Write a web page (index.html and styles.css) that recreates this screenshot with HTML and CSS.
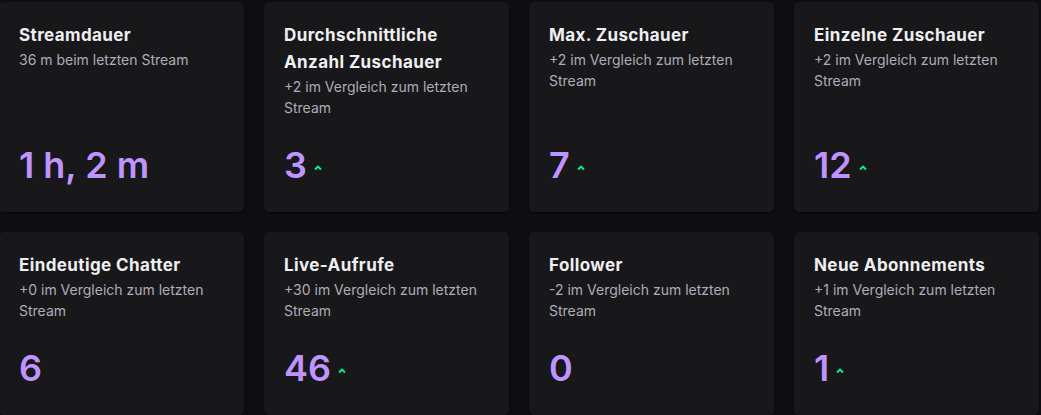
FILE: index.html
```html
<!DOCTYPE html>
<html lang="de">
<head>
    <meta charset="UTF-8">
    <meta name="viewport" content="width=device-width, initial-scale=1.0">
    <title>Stream-Zusammenfassung</title>
    <link rel="stylesheet" href="styles.css">
</head>
<body>
    <div class="stats">
        <div class="card">
            <h3>Streamdauer</h3>
            <p class="compare">36 m beim letzten Stream</p>
            <div class="value">1 h, 2 m</div>
        </div>
        <div class="card">
            <h3>Durchschnittliche Anzahl Zuschauer</h3>
            <p class="compare">+2 im Vergleich zum letzten Stream</p>
            <div class="value">3 <svg class="up" viewBox="0 0 10 10"><path d="M2 6.5 5 3.5 8 6.5"/></svg></div>
        </div>
        <div class="card">
            <h3>Max. Zuschauer</h3>
            <p class="compare">+2 im Vergleich zum letzten Stream</p>
            <div class="value">7 <svg class="up" viewBox="0 0 10 10"><path d="M2 6.5 5 3.5 8 6.5"/></svg></div>
        </div>
        <div class="card">
            <h3>Einzelne Zuschauer</h3>
            <p class="compare">+2 im Vergleich zum letzten Stream</p>
            <div class="value">12 <svg class="up" viewBox="0 0 10 10"><path d="M2 6.5 5 3.5 8 6.5"/></svg></div>
        </div>
        <div class="card">
            <h3>Eindeutige Chatter</h3>
            <p class="compare">+0 im Vergleich zum letzten Stream</p>
            <div class="value">6</div>
        </div>
        <div class="card">
            <h3>Live-Aufrufe</h3>
            <p class="compare">+30 im Vergleich zum letzten Stream</p>
            <div class="value">46 <svg class="up" viewBox="0 0 10 10"><path d="M2 6.5 5 3.5 8 6.5"/></svg></div>
        </div>
        <div class="card">
            <h3>Follower</h3>
            <p class="compare">-2 im Vergleich zum letzten Stream</p>
            <div class="value">0</div>
        </div>
        <div class="card">
            <h3>Neue Abonnements</h3>
            <p class="compare">+1 im Vergleich zum letzten Stream</p>
            <div class="value">1 <svg class="up" viewBox="0 0 10 10"><path d="M2 6.5 5 3.5 8 6.5"/></svg></div>
        </div>
    </div>
</body>
</html>
```

FILE: styles.css
```css
body {
    margin: 0;
    background: #0e0e10;
    font-family: Inter, 'Noto Sans', sans-serif;
    color: #efeff1;
}
.stats {
    display: grid;
    grid-template-columns: repeat(4, 245px);
    gap: 20px;
    margin: 2px 0 0 -1px;
}
.card {
    display: flex;
    flex-direction: column;
    padding: 20px;
    background: #18181b;
    border-radius: 5px;
    box-shadow: 0 1px 2px rgba(0, 0, 0, 0.4);
}
.card h3 {
    margin: 0;
    font-size: 17px;
    font-weight: 700;
    line-height: 27px;
    letter-spacing: 0.4px;
}
.compare {
    margin: 0 0 20px;
    font-size: 14px;
    line-height: 21px;
    color: #adadb8;
}
.value {
    margin-top: auto;
    display: flex;
    align-items: center;
    gap: 6px;
    font-size: 36px;
    font-weight: 600;
    line-height: 54px;
    color: #bf94ff;
}
.up {
    width: 10px;
    height: 10px;
    margin-top: 6px;
    fill: none;
    stroke: #00f593;
    stroke-width: 1.8;
}
```
